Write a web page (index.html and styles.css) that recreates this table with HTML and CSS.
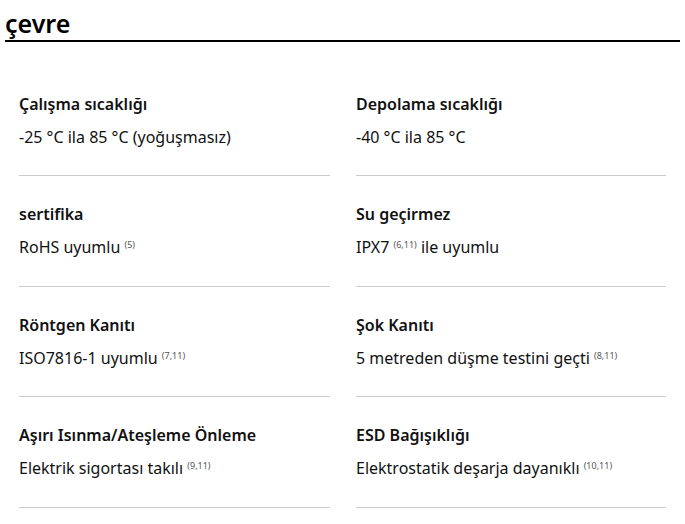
FILE: index.html
```html
<!DOCTYPE html>
<html lang="tr">
<head>
<meta charset="utf-8">
<link rel="stylesheet" href="styles.css">
</head>
<body>
<section class="section">
  <h2 class="title">çevre</h2>
  <div class="grid">
    <div class="item">
      <div class="label">Çalışma sıcaklığı</div>
      <div class="value">-25 °C ila 85 °C (yoğuşmasız)</div>
    </div>
    <div class="item">
      <div class="label">Depolama sıcaklığı</div>
      <div class="value">-40 °C ila 85 °C</div>
    </div>
    <div class="item">
      <div class="label">sertifika</div>
      <div class="value">RoHS uyumlu <sup class="ref">(5)</sup></div>
    </div>
    <div class="item">
      <div class="label">Su geçirmez</div>
      <div class="value">IPX7 <sup class="ref">(6,11)</sup> ile uyumlu</div>
    </div>
    <div class="item">
      <div class="label">Röntgen Kanıtı</div>
      <div class="value">ISO7816-1 uyumlu <sup class="ref">(7,11)</sup></div>
    </div>
    <div class="item">
      <div class="label">Şok Kanıtı</div>
      <div class="value">5 metreden düşme testini geçti <sup class="ref">(8,11)</sup></div>
    </div>
    <div class="item">
      <div class="label">Aşırı Isınma/Ateşleme Önleme</div>
      <div class="value">Elektrik sigortası takılı <sup class="ref">(9,11)</sup></div>
    </div>
    <div class="item">
      <div class="label">ESD Bağışıklığı</div>
      <div class="value">Elektrostatik deşarja dayanıklı <sup class="ref">(10,11)</sup></div>
    </div>
  </div>
</section>
</body>
</html>
```

FILE: styles.css
```css
html, body {
  margin: 0;
  padding: 0;
  background: #fff;
}
body {
  font-family: "Noto Sans", "Open Sans", sans-serif;
  color: #111;
}
.section {
  padding: 0 5px;
}
.title {
  margin: 0;
  padding-top: 7px;
  font-size: 25px;
  font-weight: 600;
  line-height: 33px;
  border-bottom: 2px solid #000;
  color: #000;
}
.grid {
  display: grid;
  grid-template-columns: 311px 310px;
  column-gap: 26px;
  padding: 0 14px;
  margin-top: 24px;
}
.item {
  padding: 27px 0 27.4px;
  border-bottom: 1px solid #cccccc;
}
.label {
  font-size: 16px;
  font-weight: 600;
  line-height: 22px;
  margin-bottom: 11px;
}
.value {
  font-size: 16px;
  line-height: 22px;
}
.ref {
  font-size: 9px;
  color: #555;
  vertical-align: 5px;
  line-height: 0;
}
```
